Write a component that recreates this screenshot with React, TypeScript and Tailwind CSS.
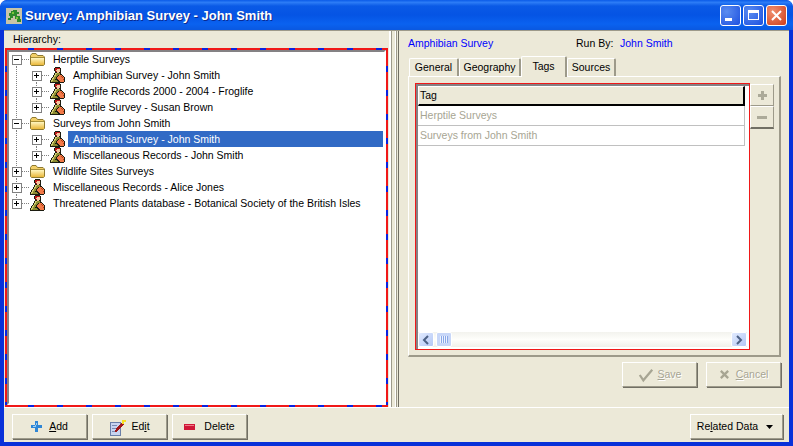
import React from "react";

const F = "font-['Liberation_Sans','Arial',sans-serif]";

function Folder() {
  return (
    <svg width="17" height="16" viewBox="0 0 17 16" className="shrink-0">
      <defs>
        <linearGradient id="fg" x1="0" y1="0" x2="0" y2="1">
          <stop offset="0" stopColor="#fff6c0" />
          <stop offset="1" stopColor="#eab83a" />
        </linearGradient>
      </defs>
      <path d="M1.5 4.5 L3 2.5 H7 L8.5 4.5 H14 L15.5 6 V13.5 L14.5 14.5 H2.5 L1.5 13.5 Z" fill="#f2cf68" stroke="#8f7a30" />
      <path d="M2 7 H15 V14 H2 Z" fill="url(#fg)" />
      <path d="M2 6.5 H15" stroke="#a89038" />
    </svg>
  );
}

const PERSON = [
  ".....kkkkk......",
  "....krrrrrk.....",
  "....krrsssk.....",
  "....krssssk.....",
  ".....krsssk.....",
  ".....kksskk.....",
  "....kyygggk.....",
  "....kyggggkk....",
  "...kyyggkoook...",
  "...kyggkoooOok..",
  "..kyggkoooooOok.",
  ".kyyggkoooooook.",
  ".kyggkkkoooooOk.",
  "kyyggggkkoooook.",
  "kyggggggkkooook.",
  "kkkkkkkkkkkkkk..",
];
const PAL: Record<string, string> = { k: "#1c1c10", r: "#c01818", s: "#f4c8a0", g: "#8c8c30", y: "#d0cc70", o: "#f27a48", O: "#b84018" };

function Person() {
  return (
    <svg width="17" height="16" viewBox="0 0 17 16" className="shrink-0" shapeRendering="crispEdges">
      {PERSON.flatMap((row, y) =>
        row.split("").map((c, x) => (c === "." ? null : <rect key={`${x}-${y}`} x={x + 1} y={y} width="1" height="1" fill={PAL[c]} />))
      )}
    </svg>
  );
}

function Guides({ level, open, up, down, outer }: { level: 0 | 1; open?: boolean; up: boolean; down: boolean; outer?: boolean }) {
  const cx = level === 0 ? 9 : 29;
  const w = level === 0 ? 21 : 41;
  const line = cx - 0.5;
  return (
    <svg width={w} height="16" viewBox={`0 0 ${w} 16`} className="shrink-0" shapeRendering="crispEdges">
      {outer && <path d="M8.5 0 V16" stroke="#808080" strokeDasharray="1 1" />}
      {up && <path d={`M${line} 0 V4`} stroke="#808080" strokeDasharray="1 1" />}
      {down && <path d={`M${line} 13 V16`} stroke="#808080" strokeDasharray="1 1" />}
      <path d={`M${cx + 5} 8.5 H${w}`} stroke="#808080" strokeDasharray="1 1" />
      <rect x={cx - 4.5} y={4.5} width={9} height={9} fill="#fff" stroke="#808080" />
      <path d={`M${cx - 3} 8.5 H${cx + 2}`} stroke="#000" />
      {!open && <path d={`M${line} 6 V11`} stroke="#000" />}
    </svg>
  );
}

function TreeRow(p: { level: 0 | 1; folder?: boolean; open?: boolean; up: boolean; down: boolean; outer?: boolean; text: string; selected?: boolean }) {
  return (
    <div className="flex h-4 items-center">
      <Guides level={p.level} open={p.open} up={p.up} down={p.down} outer={p.outer} />
      {p.folder ? <Folder /> : <Person />}
      <div className={`ml-[2px] h-4 pl-[5px] leading-[16px] whitespace-nowrap ${p.selected ? "flex-1 bg-[#316ac5] text-white" : "text-black"}`}>
        {p.text}
      </div>
    </div>
  );
}

function Btn({ w, gap, disabled, children }: { w: string; gap: string; disabled?: boolean; children: React.ReactNode }) {
  return (
    <div className={`${w} ${gap} h-[25px] flex items-center justify-center border border-white border-r-[#9d9a8a] border-b-[#9d9a8a] shadow-[1px_1px_0_#716f64] ${disabled ? "text-[#a7a593] [text-shadow:1px_1px_0_#fff]" : "text-black"}`}>
      {children}
    </div>
  );
}

function Tab({ label, active, w }: { label: string; active?: boolean; w: string }) {
  return (
    <div className={`${w} ${active ? "h-[21px] bg-[#ece9d8] -mb-px z-10" : "h-[18px] pt-[1px]"} flex items-center justify-center border-t border-l border-white border-r-2 border-r-[#9d9a8a] rounded-t-[2px]`}>
      {label}
    </div>
  );
}

const dash =
  "[background:repeating-linear-gradient(90deg,#f01818_0_23px,#0a22e0_23px_29px,#f01818_29px_29px)_top/100%_2px_no-repeat,repeating-linear-gradient(90deg,#f01818_0_23px,#0a22e0_23px_29px,#f01818_29px_29px)_bottom/100%_2px_no-repeat,repeating-linear-gradient(180deg,#f01818_0_18px,#0a22e0_18px_24px)_left/2px_100%_no-repeat,repeating-linear-gradient(180deg,#f01818_0_18px,#0a22e0_18px_24px)_right/2px_100%_no-repeat]";

function ScrollBtn({ dir }: { dir: "l" | "r" }) {
  return (
    <div className="w-[16px] h-[15px] rounded-[2px] border border-white bg-[linear-gradient(135deg,#e1eafe,#b4c8f6)] flex items-center justify-center shrink-0">
      <svg width="8" height="10" viewBox="0 0 8 10">
        <path d={dir === "l" ? "M6 1 L2 5 L6 9" : "M2 1 L6 5 L2 9"} fill="none" stroke="#4d6185" strokeWidth="2" />
      </svg>
    </div>
  );
}

export default function App() {
  return (
    <div className={`${F} w-[793px] h-[446px] overflow-hidden bg-[#0831d9] flex flex-col text-[10.5px] rounded-t-[7px]`}>
      <div className="h-[30px] shrink-0 flex items-center pt-[2px] pl-[5px] pr-[6px] bg-[linear-gradient(180deg,#0a5be8_0%,#2c7cf6_8%,#0a5ae6_20%,#0554e4_50%,#0a62f0_80%,#0a58e0_100%)] rounded-t-[7px]">
        <svg width="18" height="18" viewBox="0 0 18 18" className="mr-[1px] shrink-0" shapeRendering="crispEdges">
          <rect x="1" y="1" width="16" height="16" fill="#c8c4a8" />
          <path d="M8 3 H12 V5 H14 V7 H12 V9 H15 V12 H16 V15 H12 V12 H10 V9 H8 V11 H6 V13 H3 V11 H5 V9 H4 V6 H6 V4 H8 Z" fill="#2e8a2e" />
          <path d="M7 5 H9 V7 H7 Z M11 10 H13 V12 H11 Z" fill="#7cc83c" />
        </svg>
        <div className="ml-[1px] text-white font-bold text-[13px] [text-shadow:1px_1px_0_#0a2a90] whitespace-nowrap">Survey: Amphibian Survey - John Smith</div>
        <div className="ml-auto flex gap-[2px] -mt-[2px]">
          <div className="w-[21px] h-[21px] rounded-[3px] border border-white bg-[radial-gradient(circle_at_30%_30%,#5a8cf0,#1c50e0)] flex items-end pl-[4px] pb-[4px]">
            <div className="w-[7px] h-[3px] bg-white" />
          </div>
          <div className="w-[21px] h-[21px] rounded-[3px] border border-white bg-[radial-gradient(circle_at_30%_30%,#5a8cf0,#1c50e0)] flex items-center justify-center">
            <div className="w-[11px] h-[10px] border border-white border-t-[3px]" />
          </div>
          <div className="w-[21px] h-[21px] rounded-[3px] border border-white bg-[radial-gradient(circle_at_30%_30%,#f09070,#d03c18)] flex items-center justify-center">
            <svg width="11" height="11" viewBox="0 0 11 11"><path d="M1 1 L10 10 M10 1 L1 10" stroke="#fff" strokeWidth="2" /></svg>
          </div>
        </div>
      </div>
      <div className="flex-1 min-h-0 ml-[4px] mr-[4px] mb-[4px] bg-[#ece9d8] flex flex-col border-t border-t-[#9d9a8a]">
        <div className="flex h-[376px] shrink-0">
          <div className="w-[384px] shrink-0 pl-[1px] flex flex-col">
            <div className="h-[17px] pl-[8px] pt-[1px] leading-[14px] text-black">Hierarchy:</div>
            <div className={`h-[359px] p-[2px] ${dash}`}>
              <div className="h-full bg-white border-2 border-[#848284] border-r-white border-b-white pr-[1px]">
                <div className="-ml-[1px] -mt-[1px]">
                  <TreeRow level={0} folder open up={false} down text="Herptile Surveys" />
                  <TreeRow level={1} up={false} down outer text="Amphibian Survey - John Smith" />
                  <TreeRow level={1} up down outer text="Froglife Records 2000 - 2004 - Froglife" />
                  <TreeRow level={1} up down={false} outer text="Reptile Survey - Susan Brown" />
                  <TreeRow level={0} folder open up down text="Surveys from John Smith" />
                  <TreeRow level={1} up={false} down outer selected text="Amphibian Survey - John Smith" />
                  <TreeRow level={1} up down={false} outer text="Miscellaneous Records - John Smith" />
                  <TreeRow level={0} folder up down text="Wildlife Sites Surveys" />
                  <TreeRow level={0} up down text="Miscellaneous Records - Alice Jones" />
                  <TreeRow level={0} up down={false} text="Threatened Plants database - Botanical Society of the British Isles" />
                </div>
              </div>
            </div>
          </div>
          <div className="w-[10px] shrink-0 ml-[1px] flex">
            <div className="w-[2px] bg-white" />
            <div className="w-[1px] bg-[#9d9a8a]" />
            <div className="w-[3px]" />
            <div className="w-[1px] bg-white" />
            <div className="w-[1px] bg-[#9d9a8a]" />
            <div className="w-[1px]" />
            <div className="w-[1px] bg-[#716f64]" />
          </div>
          <div className="flex-1 pl-[9px] pr-[8px] flex flex-col">
            <div className="h-[25px] flex pt-[5px] leading-[14px]">
              <div className="w-[168px] text-[#0000ff]">Amphibian Survey</div>
              <div className="text-black w-[44px]">Run By:</div>
              <div className="text-[#0000ff]">John Smith</div>
            </div>
            <div className="flex h-[20px] items-end pl-[1px] text-black relative">
              <Tab w="w-[50px]" label="General" />
              <Tab w="w-[62px]" label="Geography" />
              <Tab w="w-[46px]" label="Tags" active />
              <Tab w="w-[49px]" label="Sources" />
            </div>
            <div className="h-[281px] shrink-0 border-t border-l border-white border-r-2 border-r-[#9d9a8a] border-b-2 border-b-[#9d9a8a] pl-[6px] pt-[6px] flex">
              <div className="w-[335px] h-[267px] border border-[#f01818] flex flex-col shrink-0">
                <div className="flex-1 min-h-0 border-t-2 border-l-2 border-t-[#848284] border-l-[#848284] pr-[2px] pb-[2px] flex flex-col bg-white">
                  <div className="h-[20px] shrink-0 w-[327px] bg-[#ece9d8] border-t border-l border-white border-b-2 border-r-2 border-b-black border-r-black pl-[1px] pt-[1px] flex items-center text-black">Tag</div>
                  <div className="h-[20px] shrink-0 w-[327px] border-b border-r border-[#c0c0c0] pl-[2px] pt-[1px] flex items-center text-[#a7a593]">Herptile Surveys</div>
                  <div className="h-[20px] shrink-0 w-[327px] border-b border-r border-[#c0c0c0] pl-[2px] pt-[1px] flex items-center text-[#a7a593]">Surveys from John Smith</div>
                  <div className="flex-1" />
                  <div className="h-[15px] shrink-0 bg-[linear-gradient(180deg,#f3f3ee,#fefefb_50%,#f0f0ea)] flex items-center">
                    <ScrollBtn dir="l" />
                    <div className="w-[16px] h-[15px] ml-[2px] rounded-[2px] border border-white bg-[#c8d7f8] flex items-center justify-center">
                      <div className="w-[8px] h-[7px] bg-[repeating-linear-gradient(90deg,#eef3fe_0_1px,#8aa8e8_1px_2px)]" />
                    </div>
                    <div className="flex-1" />
                    <ScrollBtn dir="r" />
                  </div>
                </div>
              </div>
              <div className="w-[24px] shrink-0 flex flex-col mt-[1px]">
                <div className="h-[22px] border border-white border-r-[#9d9a8a] border-b-[#9d9a8a] flex items-center justify-center">
                  <svg width="11" height="11" viewBox="0 0 11 11" shapeRendering="crispEdges"><path d="M4 1 H7 V4 H10 V7 H7 V10 H4 V7 H1 V4 H4 Z" fill="#acaa99" /></svg>
                </div>
                <div className="h-[23px] border border-white border-r-[#9d9a8a] border-b-2 border-b-[#716f64] flex items-center justify-center">
                  <div className="w-[10px] h-[3px] bg-[#acaa99]" />
                </div>
              </div>
            </div>
            <div className="flex justify-end gap-[9px] pt-[5px]">
              <Btn w="w-[75px]" gap="gap-[4px]" disabled>
                <svg width="16" height="16" viewBox="0 0 18 16"><path d="M2 8 L6 14 L16 2" fill="none" stroke="#a7a593" strokeWidth="2.5" /></svg>
                <span><u>S</u>ave</span>
              </Btn>
              <Btn w="w-[75px]" gap="gap-[6px]" disabled>
                <svg width="11" height="11" viewBox="0 0 12 12"><path d="M2 2 L10 10 M10 2 L2 10" stroke="#a7a593" strokeWidth="2.5" /></svg>
                <span><u>C</u>ancel</span>
              </Btn>
            </div>
          </div>
        </div>
        <div className="flex-1 border-t border-t-white flex items-start pt-[6px] pl-[8px] pr-[6px]">
          <div className="flex gap-[5px]">
            <Btn w="w-[75px]" gap="gap-[6px]">
              <svg width="11" height="11" viewBox="0 0 11 11" shapeRendering="crispEdges"><path d="M4 0 H7 V4 H11 V7 H7 V11 H4 V7 H0 V4 H4 Z" fill="#2f86d6" /><path d="M4 4 H6 V2 H5 V5 H2 V6 H5 Z" fill="#9cd0f4" /></svg>
              <span className="ml-[1px]"><u>A</u>dd</span>
            </Btn>
            <Btn w="w-[75px]" gap="gap-[4px]">
              <svg width="18" height="18" viewBox="0 0 18 18" shapeRendering="crispEdges"><path d="M1 4 H11 V17 H1 Z" fill="#c8d4f0" stroke="#6a7fa8" /><path d="M3 7 H8 M3 10 H8 M3 13 H8" stroke="#7a8ab0" /><path d="M7 11 L13 4 L15 6 L9 13 L6 14 Z" fill="#a01818" /><path d="M13 2 H17 V4 H15 V6 H13 Z" fill="#f8e020" /></svg>
              <span>Ed<u>i</u>t</span>
            </Btn>
            <Btn w="w-[75px]" gap="gap-[6px]">
              <svg width="11" height="6" viewBox="0 0 11 6" className="mr-[3px]"><rect width="11" height="6" fill="#d01838" /><rect x="1" y="1" width="9" height="1" fill="#f07888" /></svg>
              <span>Delete</span>
            </Btn>
          </div>
          <div className="ml-auto">
            <Btn w="w-[93px]" gap="gap-[6px]">
              <span>Re<u>l</u>ated Data</span>
              <svg width="7" height="4" viewBox="0 0 7 4" className="ml-[2px] mr-[3px]"><path d="M0 0 H7 L3.5 4 Z" fill="#000" /></svg>
            </Btn>
          </div>
        </div>
      </div>
    </div>
  );
}
